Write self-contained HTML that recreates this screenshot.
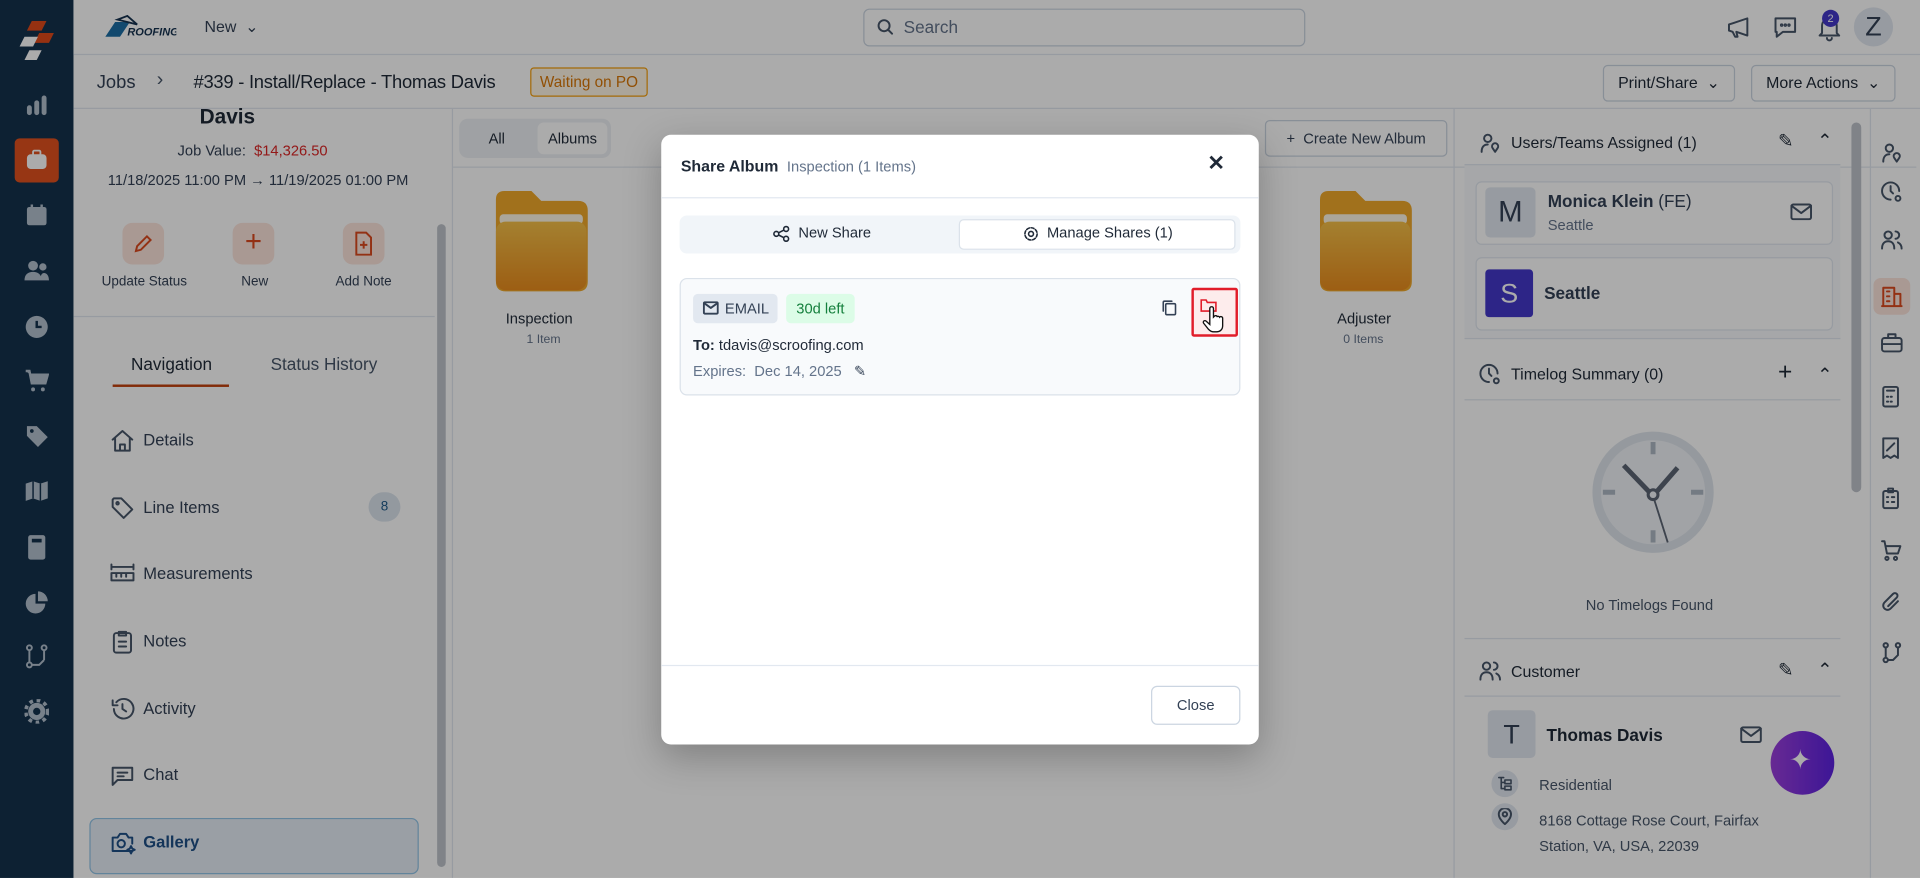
<!DOCTYPE html>
<html><head><meta charset="utf-8"><style>
*{box-sizing:border-box;margin:0;padding:0}
html,body{width:1920px;height:878px;overflow:hidden;background:#fff;font-family:"Liberation Sans",sans-serif;color:#1f2937}
#w{position:absolute;left:0;top:0;width:1568px;height:717px;transform:scale(1.22449);transform-origin:0 0;overflow:hidden;background:#fff}
.a{position:absolute}
.ic{stroke:#475569;fill:none;stroke-width:1.6;stroke-linecap:round;stroke-linejoin:round}
.sb svg{position:absolute;left:20px}
.nav{position:absolute;left:90px;font-size:13.5px;color:#334155}
.nav svg{position:absolute;left:0;top:-2px}
.nav span{position:absolute;left:27px;top:0;white-space:nowrap}
.ri svg{position:absolute;left:1536px}
#ov{position:absolute;left:0;top:0;width:1568px;height:717px;background:rgba(0,0,0,0.33)}
</style></head><body><div id="w">
<div class="a" style="left:0;top:0;width:60px;height:717px;background:#14324d"></div>
<svg class="a" style="left:14px;top:17px" width="32" height="34" viewBox="0 0 32 34"><polygon points="12,0 24,0 20,8 8,8" fill="#e04a1a"/><polygon points="18,10 30,10 26,18 14,18" fill="#e04a1a"/><polygon points="6,13 17,13 13,21 2,21" fill="#fff"/><polygon points="10,24 20,24 16,32 6,32" fill="#fff"/></svg>
<div class="sb">
<svg style="top:77px" width="20" height="18" viewBox="0 0 20 18"><rect x="2" y="9" width="4" height="8" rx="2" fill="#b4c0ce"/><rect x="8" y="5" width="4" height="12" rx="2" fill="#b4c0ce"/><rect x="14" y="1" width="4" height="16" rx="2" fill="#b4c0ce"/></svg>
<div class="a" style="left:12px;top:113px;width:36px;height:36px;border-radius:4px;background:#e2511f"></div>
<svg style="top:122px;left:21px" width="18" height="18" viewBox="0 0 18 18"><rect x="1" y="4" width="16" height="12" rx="3" fill="#fff"/><rect x="6" y="1" width="6" height="4" rx="1" fill="none" stroke="#fff" stroke-width="1.5"/></svg>
<svg style="top:166px" width="20" height="20" viewBox="0 0 20 20"><rect x="2" y="3" width="16" height="15" rx="2" fill="#b4c0ce"/><rect x="5" y="1" width="2" height="4" fill="#b4c0ce"/><rect x="13" y="1" width="2" height="4" fill="#b4c0ce"/></svg>
<svg style="top:212px" width="20" height="18" viewBox="0 0 20 18"><circle cx="7" cy="5" r="4" fill="#b4c0ce"/><circle cx="15" cy="6" r="3" fill="#b4c0ce"/><path d="M0 17c0-5 3-7 7-7s7 2 7 7z M13 17c0-4 1-6 3-6s4 2 4 6z" fill="#b4c0ce"/></svg>
<svg style="top:257px" width="20" height="20" viewBox="0 0 20 20"><circle cx="10" cy="10" r="9" fill="#b4c0ce"/><path d="M10 5v5h4" stroke="#14324d" stroke-width="2" fill="none"/></svg>
<svg style="top:301px" width="20" height="20" viewBox="0 0 20 20"><path d="M1 2h3l2 10h11l2-7H5" fill="#b4c0ce" stroke="#b4c0ce" stroke-width="2"/><circle cx="7" cy="17" r="1.6" fill="#b4c0ce"/><circle cx="15" cy="17" r="1.6" fill="#b4c0ce"/></svg>
<svg style="top:346px" width="20" height="20" viewBox="0 0 20 20"><path d="M2 2h8l9 9-8 8-9-9z" fill="#b4c0ce"/><circle cx="6" cy="6" r="1.5" fill="#14324d"/></svg>
<svg style="top:391px" width="20" height="20" viewBox="0 0 20 20"><path d="M1 4l6-2 6 2 6-2v14l-6 2-6-2-6 2z" fill="#b4c0ce"/><path d="M7 2v14M13 4v14" stroke="#14324d" stroke-width="1.2"/></svg>
<svg style="top:436px" width="20" height="22" viewBox="0 0 20 22"><rect x="3" y="1" width="14" height="20" rx="2" fill="#b4c0ce"/><rect x="6" y="4" width="8" height="3" fill="#14324d"/></svg>
<svg style="top:482px" width="20" height="20" viewBox="0 0 20 20"><path d="M9 3a8 8 0 1 0 8 8H9z" fill="#b4c0ce"/><path d="M11 1a8 8 0 0 1 8 8h-8z" fill="#b4c0ce"/></svg>
<svg style="top:526px" width="20" height="20" viewBox="0 0 20 20"><circle cx="4" cy="3" r="2" stroke="#b4c0ce" fill="none" stroke-width="1.6"/><circle cx="4" cy="17" r="2" stroke="#b4c0ce" fill="none" stroke-width="1.6"/><circle cx="16" cy="3" r="2" stroke="#b4c0ce" fill="none" stroke-width="1.6"/><path d="M4 5v10M6 17h6l4-4M16 5v8" stroke="#b4c0ce" stroke-width="1.6" fill="none"/></svg>
<svg style="top:571px" width="20" height="20" viewBox="0 0 20 20"><circle cx="10" cy="10" r="7" fill="#b4c0ce"/><circle cx="10" cy="10" r="9" fill="none" stroke="#b4c0ce" stroke-width="3" stroke-dasharray="3 3"/><circle cx="10" cy="10" r="3" fill="#14324d"/></svg>
</div>
<div class="a" style="left:60px;top:0;width:1508px;height:45px;border-bottom:1px solid #e2e8f0;background:#fff"></div>
<svg class="a" style="left:82px;top:12px" width="62" height="20" viewBox="0 0 62 20"><polygon points="4,18 12,6 24,6 16,18" fill="#1c6ea4"/><polygon points="14,4 22,1 30,8" fill="none" stroke="#16324f" stroke-width="1.5"/><text x="22" y="17" font-size="9" font-style="italic" font-weight="bold" fill="#16324f" font-family="Liberation Sans">ROOFING</text></svg>
<div class="a" style="left:167px;top:14px;font-size:13px;color:#334155">New &nbsp;⌄</div>
<div class="a" style="left:705px;top:7px;width:361px;height:31px;border:1px solid #cbd5e1;border-radius:5px"></div>
<svg class="a ic" style="left:716px;top:15px" width="14" height="14" viewBox="0 0 14 14"><circle cx="6" cy="6" r="4.5"/><path d="M9.5 9.5l3 3"/></svg>
<div class="a" style="left:738px;top:14px;font-size:14px;color:#64748b">Search</div>
<svg class="a ic" style="left:1409px;top:12px" width="22" height="20" viewBox="0 0 22 20"><path d="M3 8v5l3 1 2 4h2l-1-4 9 3V3L6 7z"/></svg>
<svg class="a ic" style="left:1447px;top:11px" width="22" height="22" viewBox="0 0 22 22"><path d="M3 4h16v11H9l-5 4v-4H3z"/><circle cx="8" cy="9.5" r=".6"/><circle cx="11" cy="9.5" r=".6"/><circle cx="14" cy="9.5" r=".6"/></svg>
<svg class="a ic" style="left:1484px;top:12px" width="20" height="22" viewBox="0 0 20 22"><path d="M4 15V9a6 6 0 0 1 12 0v6l2 2H2zM8 19a2 2 0 0 0 4 0"/></svg>
<div class="a" style="left:1488px;top:8px;width:14px;height:14px;border-radius:7px;background:#4338ca;color:#fff;font-size:9px;text-align:center;line-height:14px">2</div>
<div class="a" style="left:1514px;top:6px;width:32px;height:32px;border-radius:16px;background:#e2e8f0;color:#334155;font-size:22px;text-align:center;line-height:32px">Z</div>
<div class="a" style="left:60px;top:45px;width:1508px;height:44px;border-bottom:1px solid #e2e8f0"></div>
<div class="a" style="left:79px;top:59px;font-size:15px;color:#334155">Jobs</div>
<div class="a" style="left:128px;top:57px;font-size:16px;color:#475569">›</div>
<div class="a" style="left:158px;top:59px;font-size:15px;color:#1f2937;letter-spacing:-0.2px">#339 - Install/Replace - Thomas Davis</div>
<div class="a" style="left:433px;top:55px;width:96px;height:24px;border:1px solid #f59e0b;border-radius:3px;background:#fff7e6;color:#d97706;font-size:12.5px;text-align:center;line-height:22px">Waiting on PO</div>
<div class="a" style="left:1309px;top:53px;width:108px;height:30px;border:1px solid #cbd5e1;border-radius:4px;font-size:13px;line-height:28px;text-align:center;color:#1f2937">Print/Share &nbsp;⌄</div>
<div class="a" style="left:1430px;top:53px;width:118px;height:30px;border:1px solid #cbd5e1;border-radius:4px;font-size:13px;line-height:28px;text-align:center;color:#1f2937">More Actions &nbsp;⌄</div>
<div class="a" style="left:60px;top:89px;width:310px;height:628px;border-right:1px solid #e2e8f0"></div>
<div class="a" style="left:163px;top:86px;font-size:17px;font-weight:bold;color:#1f2937">Davis</div>
<div class="a" style="left:145px;top:116px;font-size:12px;color:#334155">Job Value: &nbsp;<span style="color:#dc2626">$14,326.50</span></div>
<div class="a" style="left:88px;top:140px;font-size:12px;color:#334155">11/18/2025 11:00 PM → 11/19/2025 01:00 PM</div>
<div class="a" style="left:100px;top:182px;width:34px;height:34px;border-radius:8px;background:#fde4dc"></div>
<svg class="a" style="left:108px;top:190px" width="18" height="18" viewBox="0 0 18 18" fill="none" stroke="#dc4a1f" stroke-width="1.6"><path d="M3 15l1-4 8-8 3 3-8 8z"/></svg>
<div class="a" style="left:83px;top:224px;font-size:11px;color:#334155">Update Status</div>
<div class="a" style="left:190px;top:182px;width:34px;height:34px;border-radius:8px;background:#fde4dc;color:#dc4a1f;font-size:24px;text-align:center;line-height:32px">+</div>
<div class="a" style="left:197px;top:224px;font-size:11px;color:#334155">New</div>
<div class="a" style="left:280px;top:182px;width:34px;height:34px;border-radius:8px;background:#fde4dc"></div>
<svg class="a" style="left:289px;top:189px" width="16" height="20" viewBox="0 0 16 20" fill="none" stroke="#dc4a1f" stroke-width="1.6"><path d="M2 1h8l4 4v14H2z M8 8v6M5 11h6"/></svg>
<div class="a" style="left:274px;top:224px;font-size:11px;color:#334155">Add Note</div>
<div class="a" style="left:60px;top:258px;width:295px;border-top:1px solid #e2e8f0"></div>
<div class="a" style="left:107px;top:289px;font-size:14px;color:#1f2937">Navigation</div>
<div class="a" style="left:92px;top:314px;width:95px;height:2px;background:#c2410c"></div>
<div class="a" style="left:221px;top:289px;font-size:14px;color:#475569">Status History</div>
<div class="nav" style="top:352px"><svg class="ic" width="20" height="20" viewBox="0 0 20 20"><path d="M2 9l8-7 8 7M4 8v10h12V8M8 18v-5h4v5"/></svg><span>Details</span></div>
<div class="nav" style="top:407px"><svg class="ic" width="20" height="20" viewBox="0 0 20 20"><path d="M2 3v6l9 9 7-7-9-9H3z"/><circle cx="6" cy="6" r="1"/></svg><span>Line Items</span></div>
<div class="a" style="left:301px;top:402px;width:26px;height:24px;border-radius:12px;background:#dbe4ee;color:#1e5a8a;font-size:11px;text-align:center;line-height:24px">8</div>
<div class="nav" style="top:461px"><svg class="ic" width="20" height="20" viewBox="0 0 20 20"><path d="M1 2v4M19 2v4M1 4h18M1 9h18v6H1zM5 9v3M9 9v3M13 9v3"/></svg><span>Measurements</span></div>
<div class="nav" style="top:516px"><svg class="ic" width="20" height="20" viewBox="0 0 20 20"><rect x="3" y="3" width="14" height="16" rx="2"/><path d="M7 2h6v3H7zM7 10h6M7 14h6"/></svg><span>Notes</span></div>
<div class="nav" style="top:571px"><svg class="ic" width="20" height="20" viewBox="0 0 20 20"><path d="M3 10a8 8 0 1 0 2-5.5M2 3v4h4M10 6v4l3 2"/></svg><span>Activity</span></div>
<div class="nav" style="top:625px"><svg class="ic" width="20" height="20" viewBox="0 0 20 20"><path d="M2 4h16v10H6l-4 4zM6 8h8M6 11h5"/></svg><span>Chat</span></div>
<div class="a" style="left:73px;top:668px;width:269px;height:46px;border:1px solid #93c5e8;border-radius:6px;background:#e6eef7"></div>
<div class="nav" style="top:680px;color:#1e4f86;font-weight:bold"><svg class="ic" style="stroke:#1e4f86" width="22" height="20" viewBox="0 0 22 20"><path d="M2 6h4l2-3h5l2 3h3v5M18 17H2V6"/><circle cx="9" cy="11" r="3"/><path d="M17 13l1 2 2 1-2 1-1 2-1-2-2-1 2-1z"/></svg><span>Gallery</span></div>
<div class="a" style="left:357px;top:183px;width:7px;height:525px;border-radius:4px;background:#bfc4cb"></div>
<div class="a" style="left:375px;top:97px;width:124px;height:32px;border-radius:7px;background:#eef1f5"></div>
<div class="a" style="left:399px;top:106px;font-size:12px;color:#1f2937">All</div>
<div class="a" style="left:439px;top:100px;width:57px;height:26px;border-radius:5px;background:#fff;font-size:12px;text-align:center;line-height:26px;color:#1f2937">Albums</div>
<div class="a" style="left:1033px;top:98px;width:149px;height:30px;border:1px solid #cbd5e1;border-radius:4px;font-size:12px;text-align:center;line-height:28px;color:#334155">+ &nbsp;Create New Album</div>
<div class="a" style="left:370px;top:136px;width:1195px;border-top:1px solid #e2e8f0"></div>
<svg class="a" style="left:403px;top:155px" width="78" height="84" viewBox="0 0 78 84"><defs><linearGradient id="g" x1="0" y1="0" x2="0" y2="1"><stop offset="0" stop-color="#f5c048"/><stop offset="1" stop-color="#ea8d1e"/></linearGradient></defs><path d="M2 8q0-7 7-7h22l8 8h30q8 0 8 8v58q0 8-8 8H10q-8 0-8-8z" fill="#f0a92a"/><rect x="5" y="20" width="68" height="8" rx="3" fill="#fff8e6"/><rect x="2" y="26" width="74" height="56" rx="8" fill="url(#g)"/></svg>
<div class="a" style="left:413px;top:253px;font-size:12px;color:#1f2937">Inspection</div>
<div class="a" style="left:430px;top:272px;font-size:10px;color:#64748b">1 Item</div>
<svg class="a" style="left:1076px;top:155px" width="78" height="84" viewBox="0 0 78 84"><path d="M2 8q0-7 7-7h22l8 8h30q8 0 8 8v58q0 8-8 8H10q-8 0-8-8z" fill="#f0a92a"/><rect x="5" y="20" width="68" height="8" rx="3" fill="#fff8e6"/><rect x="2" y="26" width="74" height="56" rx="8" fill="url(#g)"/></svg>
<div class="a" style="left:1092px;top:253px;font-size:12px;color:#1f2937">Adjuster</div>
<div class="a" style="left:1097px;top:272px;font-size:10px;color:#64748b">0 Items</div>
<div class="a" style="left:1187px;top:89px;width:340px;height:628px;border-left:1px solid #e2e8f0"></div>
<svg class="a ic" style="left:1208px;top:108px" width="18" height="18" viewBox="0 0 18 18"><circle cx="7" cy="5" r="3"/><path d="M2 16c0-4 2-6 5-6M13 16l-2-3a2.5 2.5 0 1 1 4 0z"/></svg>
<div class="a" style="left:1234px;top:109px;font-size:13px;color:#1f2937">Users/Teams Assigned (1)</div>
<div class="a" style="left:1452px;top:106px;font-size:15px;color:#1f2937">✎</div>
<div class="a" style="left:1484px;top:106px;font-size:15px;color:#1f2937">⌃</div>
<div class="a" style="left:1196px;top:134px;width:307px;height:143px;background:#f8fafc;border-top:1px solid #e2e8f0;border-bottom:1px solid #e2e8f0"></div>
<div class="a" style="left:1205px;top:148px;width:292px;height:52px;border:1px solid #e2e8f0;border-radius:5px;background:#fff"></div>
<div class="a" style="left:1213px;top:153px;width:41px;height:41px;border-radius:4px;background:#e2e8f0;font-size:24px;color:#334155;text-align:center;line-height:41px">M</div>
<div class="a" style="left:1264px;top:156px;font-size:14px;font-weight:bold;color:#334155">Monica Klein <span style="font-weight:normal">(FE)</span></div>
<div class="a" style="left:1264px;top:177px;font-size:12px;color:#64748b">Seattle</div>
<svg class="a ic" style="left:1462px;top:166px" width="18" height="14" viewBox="0 0 18 14"><rect x="1" y="1" width="16" height="12" rx="1.5"/><path d="M1 2l8 6 8-6"/></svg>
<div class="a" style="left:1205px;top:210px;width:292px;height:60px;border:1px solid #e2e8f0;border-radius:5px;background:#fff"></div>
<div class="a" style="left:1213px;top:220px;width:39px;height:39px;border-radius:3px;background:#4338ca;font-size:22px;color:#fff;text-align:center;line-height:39px">S</div>
<div class="a" style="left:1261px;top:231px;font-size:14px;font-weight:bold;color:#334155">Seattle</div>
<svg class="a ic" style="left:1208px;top:297px" width="18" height="18" viewBox="0 0 18 18"><path d="M15 8A7 7 0 1 0 8 15M8 4v4l2 2"/><circle cx="14" cy="14" r="2"/></svg>
<div class="a" style="left:1234px;top:298px;font-size:13px;color:#1f2937">Timelog Summary (0)</div>
<div class="a" style="left:1452px;top:293px;font-size:20px;color:#1f2937">+</div>
<div class="a" style="left:1484px;top:297px;font-size:15px;color:#1f2937">⌃</div>
<div class="a" style="left:1196px;top:326px;width:307px;border-top:1px solid #e2e8f0"></div>
<svg class="a" style="left:1300px;top:352px" width="100" height="100" viewBox="0 0 100 100"><circle cx="50" cy="50" r="46" fill="#f1f4f8" stroke="#dfe5ec" stroke-width="7"/><path d="M50 9v10M50 81v10M9 50h10M81 50h10" stroke="#aeb8c4" stroke-width="4"/><path d="M26 28l24 25 20-23" stroke="#5b6574" stroke-width="4" fill="none"/><path d="M50 53l12 38" stroke="#5b6574" stroke-width="1.5"/><circle cx="50" cy="52" r="4" fill="#f1f4f8" stroke="#5b6574" stroke-width="2.5"/></svg>
<div class="a" style="left:1295px;top:487px;font-size:12px;color:#475569">No Timelogs Found</div>
<div class="a" style="left:1196px;top:521px;width:307px;border-top:1px solid #e2e8f0"></div>
<svg class="a ic" style="left:1208px;top:540px" width="18" height="16" viewBox="0 0 18 16"><circle cx="6" cy="4" r="3"/><path d="M1 15c0-4 2-6 5-6s5 2 5 6M12 1a3 3 0 0 1 0 6M14 10c2 1 3 3 3 5"/></svg>
<div class="a" style="left:1234px;top:541px;font-size:13px;color:#1f2937">Customer</div>
<div class="a" style="left:1452px;top:538px;font-size:15px;color:#1f2937">✎</div>
<div class="a" style="left:1484px;top:538px;font-size:15px;color:#1f2937">⌃</div>
<div class="a" style="left:1196px;top:568px;width:307px;border-top:1px solid #e2e8f0"></div>
<div class="a" style="left:1215px;top:580px;width:39px;height:39px;border-radius:4px;background:#e2e8f0;font-size:22px;color:#334155;text-align:center;line-height:39px">T</div>
<div class="a" style="left:1263px;top:592px;font-size:14px;font-weight:bold;color:#1f2937">Thomas Davis</div>
<svg class="a ic" style="left:1421px;top:593px" width="18" height="14" viewBox="0 0 18 14"><rect x="1" y="1" width="16" height="12" rx="1.5"/><path d="M1 2l8 6 8-6"/></svg>
<div class="a" style="left:1218px;top:629px;width:22px;height:22px;border-radius:11px;background:#e2e8f0"></div>
<svg class="a ic" style="left:1223px;top:634px;stroke-width:1.3" width="12" height="12" viewBox="0 0 12 12"><path d="M1 1h4M3 1v9h3M3 5h3M6 3h5v3H6zM6 8h5v3H6z"/></svg>
<div class="a" style="left:1257px;top:634px;font-size:12px;color:#475569">Residential</div>
<div class="a" style="left:1218px;top:656px;width:22px;height:22px;border-radius:11px;background:#e2e8f0"></div>
<svg class="a ic" style="left:1223px;top:660px" width="12" height="14" viewBox="0 0 12 14"><path d="M6 13s5-4 5-8a5 5 0 0 0-10 0c0 4 5 8 5 8z"/><circle cx="6" cy="5" r="1.8"/></svg>
<div class="a" style="left:1257px;top:660px;font-size:12px;color:#475569;line-height:21px">8168 Cottage Rose Court, Fairfax<br>Station, VA, USA, 22039</div>
<div class="a" style="left:1446px;top:597px;width:52px;height:52px;border-radius:26px;background:linear-gradient(90deg,#9b3fdc,#5b21e0)"></div>
<div class="a" style="left:1461px;top:608px;font-size:22px;color:#fff">✦</div>
<div class="a" style="left:1512px;top:100px;width:8px;height:302px;border-radius:4px;background:#bfc4cb"></div>
<div class="a" style="left:1527px;top:89px;height:628px;border-left:1px solid #e2e8f0"></div>
<div class="ri">
<svg class="ic" style="top:116px" width="18" height="18" viewBox="0 0 18 18"><circle cx="7" cy="5" r="3"/><path d="M2 16c0-4 2-6 5-6M13 16l-2-3a2.5 2.5 0 1 1 4 0z"/></svg>
<svg class="ic" style="top:148px" width="18" height="18" viewBox="0 0 18 18"><path d="M15 8A7 7 0 1 0 8 15M8 4v4l2 2"/><circle cx="14" cy="14" r="2"/></svg>
<div class="a" style="left:1530px;top:227px;width:30px;height:30px;border-radius:6px;background:#fde4dc"></div>
<svg class="ic" style="top:188px" width="18" height="16" viewBox="0 0 18 16"><circle cx="6" cy="4" r="3"/><path d="M1 15c0-4 2-6 5-6s5 2 5 6M12 1a3 3 0 0 1 0 6M14 10c2 1 3 3 3 5"/></svg>
<svg class="ic" style="top:233px;stroke:#dc4a1f" width="18" height="18" viewBox="0 0 18 18"><path d="M2 17V2h9v15M11 7h5v10M1 17h16M5 5h2M5 9h2M5 13h2"/></svg>
<svg class="ic" style="top:272px" width="18" height="16" viewBox="0 0 18 16"><rect x="1" y="4" width="16" height="11" rx="2"/><path d="M6 4V1h6v3M1 9h16"/></svg>
<svg class="ic" style="top:315px" width="16" height="18" viewBox="0 0 16 18"><rect x="2" y="1" width="12" height="16" rx="1.5"/><path d="M5 4h6M5 9h1M8 9h1M5 13h1M8 13h1"/></svg>
<svg class="ic" style="top:357px" width="16" height="18" viewBox="0 0 16 18"><path d="M2 1h12v16l-3-2-3 2-3-2-3 2zM5 11l6-6"/></svg>
<svg class="ic" style="top:398px" width="16" height="18" viewBox="0 0 16 18"><rect x="2" y="3" width="12" height="14" rx="1.5"/><path d="M6 1h4v3H6zM5 8h1M9 8h2M5 12h1M9 12h2"/></svg>
<svg class="ic" style="top:441px" width="18" height="18" viewBox="0 0 18 18"><path d="M1 1h2l2 10h9l2-6H4"/><circle cx="5" cy="15" r="1.3"/><circle cx="12" cy="15" r="1.3"/></svg>
<svg class="ic" style="top:483px" width="18" height="18" viewBox="0 0 18 18"><path d="M14 8l-6 6a3 3 0 0 1-5-5l7-7a2 2 0 0 1 3 3l-7 7"/></svg>
<svg class="ic" style="top:524px" width="18" height="18" viewBox="0 0 18 18"><circle cx="4" cy="3" r="1.8"/><circle cx="4" cy="15" r="1.8"/><circle cx="14" cy="3" r="1.8"/><path d="M4 5v8M6 15h4l4-4M14 5v6"/></svg>
</div>
<div id="ov"></div>
<div class="a" style="left:540px;top:110px;width:488px;height:498px;background:#fff;border-radius:8px;box-shadow:0 10px 30px rgba(0,0,0,.25)"></div>
<div class="a" style="left:556px;top:128px;font-size:13px;font-weight:bold;color:#1f2937">Share Album <span style="font-weight:normal;color:#64748b;font-size:12px">&nbsp;Inspection (1 Items)</span></div>
<div class="a" style="left:986px;top:124px;font-size:17px;font-weight:bold;color:#1f2937">✕</div>
<div class="a" style="left:540px;top:161px;width:488px;border-top:1px solid #e2e8f0"></div>
<div class="a" style="left:555px;top:176px;width:458px;height:31px;border-radius:6px;background:#f1f5f9"></div>
<svg class="a ic" style="left:631px;top:184px;stroke:#1f2937;stroke-width:1.3" width="14" height="14" viewBox="0 0 14 14"><circle cx="3" cy="7" r="2"/><circle cx="11" cy="3" r="2"/><circle cx="11" cy="11" r="2"/><path d="M5 6l4-2M5 8l4 2"/></svg>
<div class="a" style="left:652px;top:183px;font-size:12px;color:#1f2937">New Share</div>
<div class="a" style="left:783px;top:179px;width:226px;height:25px;border:1px solid #dbe2ea;border-radius:4px;background:#fff"></div>
<svg class="a ic" style="left:835px;top:184px;stroke:#1f2937;stroke-width:1.3" width="14" height="14" viewBox="0 0 14 14"><circle cx="7" cy="7" r="2"/><circle cx="7" cy="7" r="5" stroke-dasharray="2.5 1.4"/></svg>
<div class="a" style="left:855px;top:183px;font-size:12px;color:#1f2937">Manage Shares (1)</div>
<div class="a" style="left:555px;top:227px;width:458px;height:96px;border:1px solid #dbe2ea;border-radius:6px;background:#f8fafc"></div>
<div class="a" style="left:566px;top:240px;width:69px;height:24px;border-radius:4px;background:#e2e8f0"></div>
<svg class="a ic" style="left:574px;top:246px;stroke:#334155" width="13" height="11" viewBox="0 0 13 11"><rect x=".8" y=".8" width="11.4" height="9.4" rx="1"/><path d="M1 1.5l5.5 4 5.5-4"/></svg>
<div class="a" style="left:592px;top:245px;font-size:12px;color:#334155">EMAIL</div>
<div class="a" style="left:642px;top:240px;width:56px;height:24px;border-radius:4px;background:#dcfce7;color:#15803d;font-size:12px;text-align:center;line-height:24px">30d left</div>
<svg class="a ic" style="left:949px;top:245px;stroke:#334155;stroke-width:1.3" width="12" height="13" viewBox="0 0 12 13"><rect x="3" y="3" width="8" height="9" rx="1"/><path d="M1 9V2a1 1 0 0 1 1-1h6"/></svg>
<div class="a" style="left:973px;top:235px;width:38px;height:40px;border:2px solid #e11d2a;border-radius:2px;background:#fdecec"></div>
<svg class="a" style="left:980px;top:244px" width="14" height="11" viewBox="0 0 14 11" fill="none" stroke="#e11d2a" stroke-width="1.3"><path d="M1 1h4l1 2h7v7H1z"/></svg>
<svg class="a" style="left:982px;top:250px" width="18" height="22" viewBox="0 0 18 22"><path d="M6 2a1.5 1.5 0 0 1 3 0v7l1-1a1.4 1.4 0 0 1 2 .5 1.4 1.4 0 0 1 2 .6 1.4 1.4 0 0 1 2.5 1V16c0 3-2 5-5 5H9c-2 0-3-1-4-2l-4-5a1.3 1.3 0 0 1 2-1.7L6 15z" fill="#fff" stroke="#111" stroke-width="1.1"/></svg>
<div class="a" style="left:566px;top:275px;font-size:12px;color:#1f2937"><b>To:</b> tdavis@scroofing.com</div>
<div class="a" style="left:566px;top:296px;font-size:12px;color:#64748b">Expires: &nbsp;Dec 14, 2025 &nbsp;&nbsp;<span style="color:#334155">✎</span></div>
<div class="a" style="left:540px;top:543px;width:488px;border-top:1px solid #e2e8f0"></div>
<div class="a" style="left:940px;top:560px;width:73px;height:32px;border:1px solid #cbd5e1;border-radius:5px;font-size:12px;text-align:center;line-height:30px;color:#334155">Close</div>
</div></body></html>
